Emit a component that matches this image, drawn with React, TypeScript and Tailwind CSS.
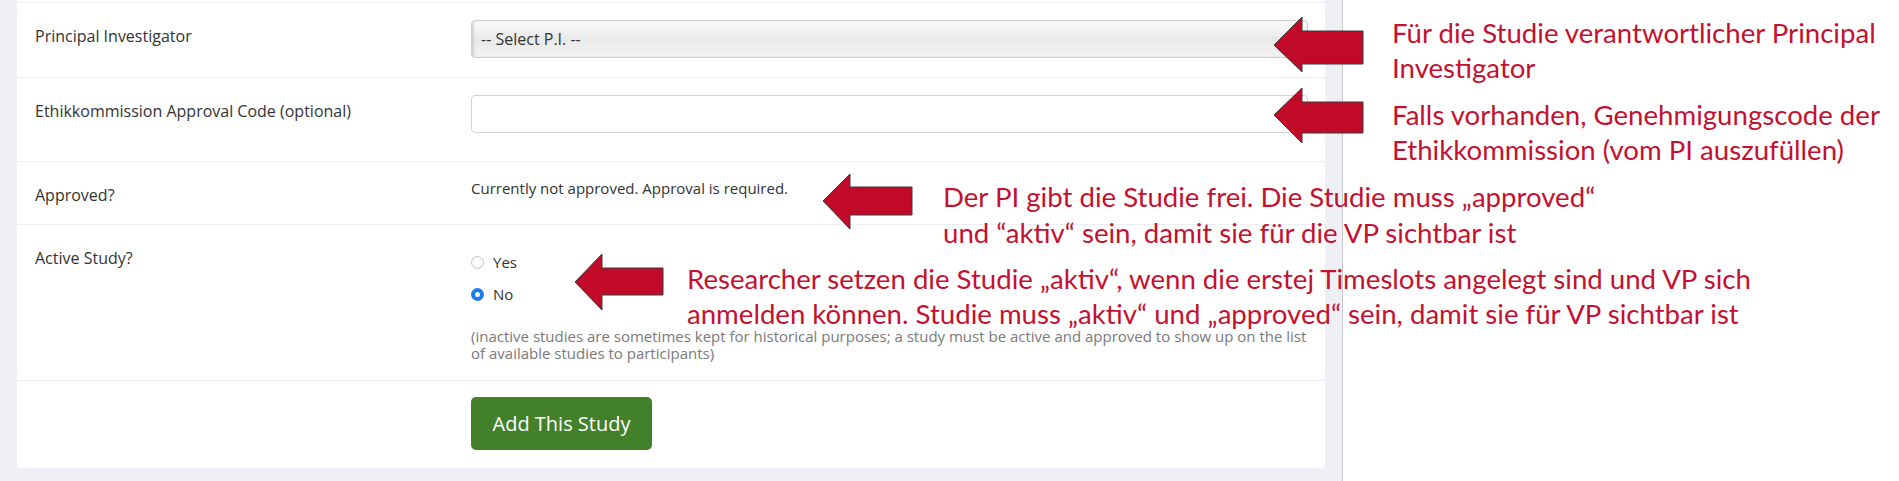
import React from "react";

const formFont = { fontFamily: '"Open Sans", "Noto Sans", Arial, sans-serif' };
const noteFont = { fontFamily: 'Lato, "Open Sans", Arial, sans-serif' };

type Arrow = { tx: number; ty: number; hx: number; ht: number; hb: number; st: number; sb: number; sx: number };

const arrows: Arrow[] = [
  { tx: 1274, ty: 45, hx: 1302, ht: 17, hb: 72, st: 31, sb: 64, sx: 1363 },
  { tx: 1274, ty: 115, hx: 1302, ht: 88, hb: 143, st: 102, sb: 133, sx: 1363 },
  { tx: 823, ty: 201, hx: 850, ht: 174, hb: 229, st: 187, sb: 215, sx: 912 },
  { tx: 575, ty: 282, hx: 602, ht: 254, hb: 310, st: 268, sb: 295, sx: 663 },
];

function Radio({ checked, label }: { checked?: boolean; label: string }) {
  return (
    <label className="flex items-center gap-[9px] h-[20px] text-[15px] text-[#333]">
      {checked ? (
        <span className="w-[13px] h-[13px] rounded-full bg-[#1a7bf2] flex items-center justify-center">
          <span className="w-[5px] h-[5px] rounded-full bg-white" />
        </span>
      ) : (
        <span className="w-[13px] h-[13px] rounded-full border border-[#c4c4c4] bg-[#fafafa]" />
      )}
      {label}
    </label>
  );
}

function Row({ label, children }: { label?: string; children: React.ReactNode }) {
  return (
    <div className="flex border-t border-[#eceef4]">
      <div className="w-[454px] pl-[18px] pt-[22px] text-[16px] leading-[22px] text-[#333]">{label}</div>
      <div className="flex-1 pr-[17px]">{children}</div>
    </div>
  );
}

export default function App() {
  return (
    <div className="relative w-[1899px] h-[481px] overflow-hidden bg-white flex" style={formFont}>
      {/* screenshot of the form */}
      <div className="w-[1342px] h-full bg-[#eff0f6] pl-[17px] pr-[17px]">
        <div className="bg-white rounded-b-[4px] pt-[2px]">
          <Row label="Principal Investigator">
            <div className="pt-[17px] pb-[19px]">
              <div className="h-[38px] rounded-[4px] border border-[#cfcfcf] bg-gradient-to-b from-[#fbfbfb] via-[#e9e9e9] to-[#f3f3f3] shadow-[inset_2px_0_2px_rgba(0,0,0,0.12)] flex items-center pl-[9px] text-[16px] text-[#333]">
                -- Select P.I. --
              </div>
            </div>
          </Row>
          <Row label="Ethikkommission Approval Code (optional)">
            <div className="pt-[17px] pb-[28px]">
              <div className="h-[38px] rounded-[4px] border border-[#d4d4d4] bg-white" />
            </div>
          </Row>
          <Row label="Approved?">
            <div className="pt-[16px] pb-[26px] text-[15px] leading-[20px] text-[#333]">
              Currently not approved. Approval is required.
            </div>
          </Row>
          <Row label="Active Study?">
            <div className="pt-[27px] pb-[18px]">
              <div className="flex flex-col gap-[12px]">
                <Radio label="Yes" />
                <Radio checked label="No" />
              </div>
              <p className="mt-[24px] text-[15px] leading-[17px] text-[#7a7a7a]">
                (inactive studies are sometimes kept for historical purposes; a study must be active and approved to show up on the list
                <br />
                of available studies to participants)
              </p>
            </div>
          </Row>
          <Row>
            <div className="pt-[16px] pb-[18px]">
              <button className="w-[181px] h-[53px] rounded-[5px] bg-[#43802a] text-white text-[20px]">Add This Study</button>
            </div>
          </Row>
        </div>
      </div>
      <div className="flex-1 h-full border-l border-[#c9c9c9] bg-white" />

      {/* annotation arrows */}
      <svg className="absolute inset-0 pointer-events-none" width={1899} height={481}>
        {arrows.map((a, i) => (
          <polygon
            key={i}
            points={`${a.tx},${a.ty} ${a.hx},${a.ht} ${a.hx},${a.st} ${a.sx},${a.st} ${a.sx},${a.sb} ${a.hx},${a.sb} ${a.hx},${a.hb}`}
            fill="#c10a28"
            stroke="#3b3b3b"
            strokeWidth={1}
          />
        ))}
      </svg>

      {/* annotation texts */}
      <div className="absolute left-[1392px] top-[15px] text-[27.6px] leading-[35px] text-[#c4112f] whitespace-nowrap" style={noteFont}>
        Für die Studie verantwortlicher Principal
        <br />
        Investigator
      </div>
      <div className="absolute left-[1392px] top-[97px] text-[27.6px] leading-[35px] text-[#c4112f] whitespace-nowrap" style={noteFont}>
        Falls vorhanden, Genehmigungscode der
        <br />
        Ethikkommission (vom PI auszufüllen)
      </div>
      <div className="absolute left-[943px] top-[179px] text-[27.6px] leading-[36px] text-[#c4112f] whitespace-nowrap" style={noteFont}>
        Der PI gibt die Studie frei. Die Studie muss „approved“
        <br />
        und “aktiv“ sein, damit sie für die VP sichtbar ist
      </div>
      <div className="absolute left-[687px] top-[261px] text-[27.6px] leading-[35px] text-[#c4112f] whitespace-nowrap" style={noteFont}>
        Researcher setzen die Studie „aktiv“, wenn die erstej Timeslots angelegt sind und VP sich
        <br />
        anmelden können. Studie muss „aktiv“ und „approved“ sein, damit sie für VP sichtbar ist
      </div>
    </div>
  );
}
